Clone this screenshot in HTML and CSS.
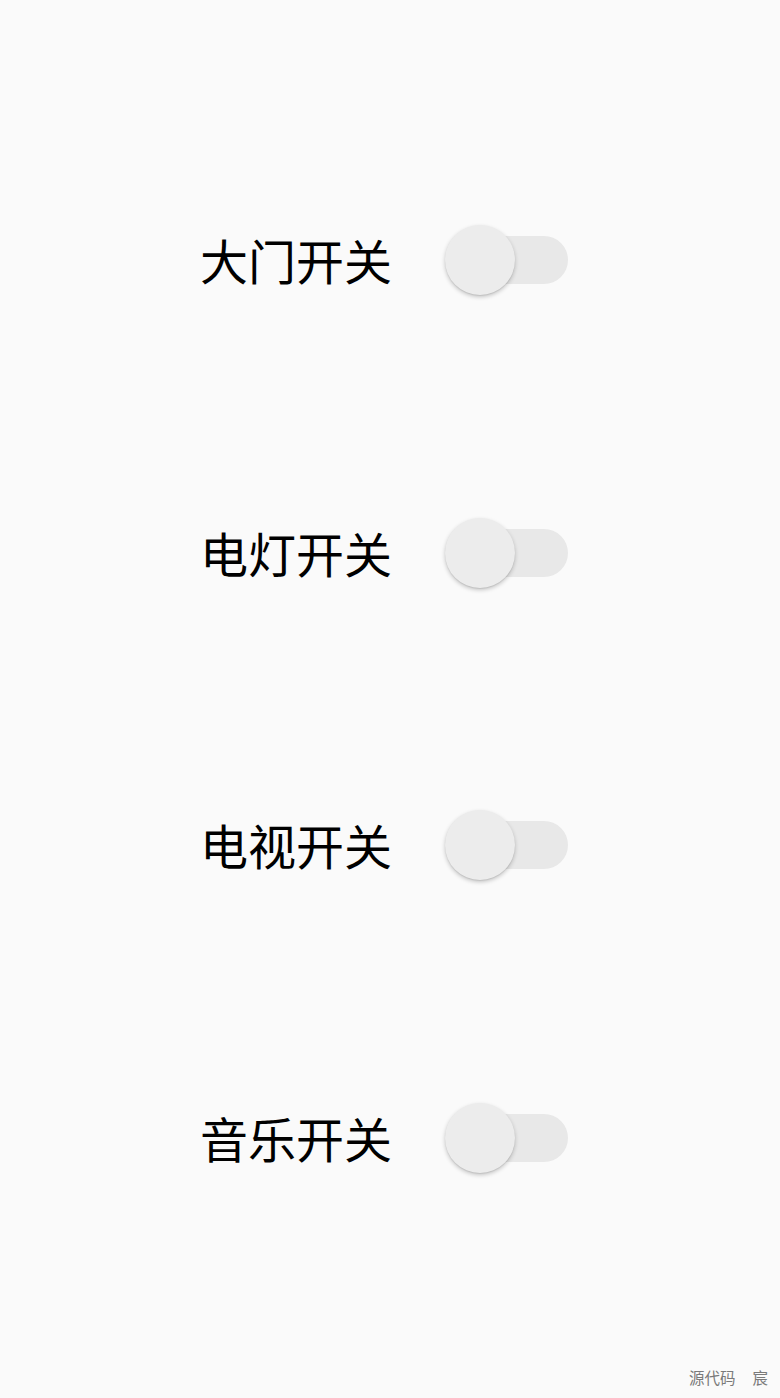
FILE: index.html
```html
<!DOCTYPE html>
<html lang="zh">
<head>
<meta charset="utf-8">
<link rel="stylesheet" href="styles.css">
</head>
<body>
<main class="list">
  <div class="row"><span class="label">大门开关</span><span class="switch"><span class="track"></span><span class="thumb"></span></span></div>
  <div class="row"><span class="label">电灯开关</span><span class="switch"><span class="track"></span><span class="thumb"></span></span></div>
  <div class="row"><span class="label">电视开关</span><span class="switch"><span class="track"></span><span class="thumb"></span></span></div>
  <div class="row"><span class="label">音乐开关</span><span class="switch"><span class="track"></span><span class="thumb"></span></span></div>
</main>
<div class="mark"><span>源代码</span><span>宸</span></div>
</body>
</html>
```
FILE: styles.css
```css
html, body {
  margin: 0;
  padding: 0;
}
body {
  width: 780px;
  height: 1398px;
  background: #fafafa;
  font-family: "Noto Sans CJK SC", "Noto Sans", sans-serif;
  position: relative;
  overflow: hidden;
}
.list {
  padding-top: 114px;
  display: flex;
  flex-direction: column;
}
.row {
  height: 292.5px;
  display: flex;
  align-items: center;
  padding-left: 200px;
}
.label {
  font-size: 48px;
  line-height: 1;
  color: #000;
  width: 192px;
  position: relative;
  top: -1px;
}
.switch {
  margin-left: 53px;
  width: 124px;
  height: 70px;
  display: flex;
  align-items: center;
  position: relative;
}
.track {
  width: 122px;
  height: 48px;
  border-radius: 24px;
  background: #e8e8e8;
  margin-left: 1px;
}
.thumb {
  position: absolute;
  left: 0;
  top: 0;
  width: 70px;
  height: 70px;
  border-radius: 50%;
  background: #ececec;
  box-shadow: 0 2px 4px rgba(0,0,0,0.22), 0 1px 1px rgba(0,0,0,0.08);
}
.mark {
  position: absolute;
  right: 12px;
  bottom: 13px;
  font-size: 15.5px;
  color: #7a7a7a;
  line-height: 1;
  display: flex;
  gap: 17px;
}
```
